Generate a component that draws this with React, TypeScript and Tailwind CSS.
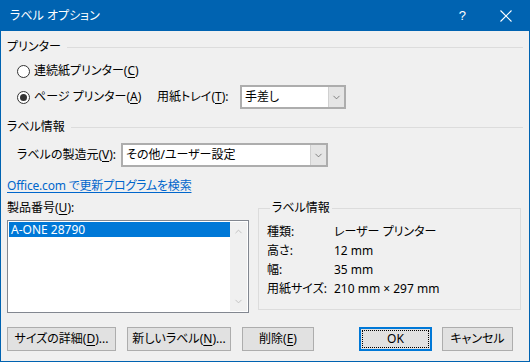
import { ChevronDown, ChevronUp } from "lucide-react";

const font = "[font-family:'Noto_Sans','Noto_Sans_CJK_JP',sans-serif] [font-feature-settings:'palt']";

function Radio({ checked }: { checked?: boolean }) {
  return (
    <span className="flex h-[13px] w-[13px] items-center justify-center rounded-full border border-[#333] bg-white">
      {checked ? <span className="h-[7px] w-[7px] rounded-full bg-[#333]" /> : null}
    </span>
  );
}

function Select({ value, width }: { value: string; width: string }) {
  return (
    <div className={`flex h-[24px] items-stretch border-2 border-[#adadad] bg-white ${width}`}>
      <div className="flex flex-1 items-center pl-[3px] text-[12px] text-black">{value}</div>
      <div className="flex w-[16px] items-center justify-center border-l border-[#d0d0d0] bg-[#e5e5e5]">
        <ChevronDown size={11} strokeWidth={1.5} className="text-[#555]" />
      </div>
    </div>
  );
}

function U({ c }: { c: string }) {
  return <span className="underline underline-offset-2">{c}</span>;
}

function GroupHeader({ label }: { label: string }) {
  return (
    <div className="flex h-[16px] items-center gap-[6px]">
      <span className="text-[12px] leading-none">{label}</span>
      <div className="h-px flex-1 bg-[#dcdcdc]" />
    </div>
  );
}

function Btn({ children, width, primary }: { children: React.ReactNode; width: string; primary?: boolean }) {
  if (primary) {
    return (
      <div className={`flex h-[24px] items-center justify-center border-2 border-[#0078d7] bg-[#e1e1e1] p-px ${width}`}>
        <div className="flex h-full w-full items-center justify-center border border-dotted border-black text-[12px]">
          {children}
        </div>
      </div>
    );
  }
  return (
    <div className={`flex h-[24px] items-center justify-center border border-[#adadad] bg-[#e1e1e1] text-[12px] ${width}`}>
      {children}
    </div>
  );
}

export default function App() {
  return (
    <div className={`flex h-[362px] w-[530px] flex-col border-x border-b border-[#0063b1] bg-[#f0f0f0] text-black ${font}`}>
      <div className="flex h-[31px] shrink-0 items-center bg-[#0063b1] pl-[9px] text-white">
        <span className="text-[12px]">ラベル オプション</span>
        <span className="ml-auto mr-[34px] text-[13px] [font-family:'Liberation_Sans',sans-serif]">?</span>
        <svg width="12" height="12" viewBox="0 0 12 12" className="mr-[17px]">
          <path d="M0.5 0.5 L11.5 11.5 M11.5 0.5 L0.5 11.5" stroke="white" strokeWidth="1.1" />
        </svg>
      </div>

      <div className="flex flex-col pl-[6px] pr-[6px]">
        <div className="mt-[8px]">
          <GroupHeader label="プリンター" />
        </div>

        <div className="mt-[8px] flex h-[16px] items-center pl-[10px]">
          <Radio />
          <span className="ml-[4px] text-[12px]">
            連続紙プリンター(<U c="C" />)
          </span>
        </div>

        <div className="mt-[6px] flex h-[24px] items-center pl-[10px]">
          <Radio checked />
          <span className="ml-[4px] w-[123px] text-[12px]">
            ページ プリンター(<U c="A" />)
          </span>
          <span className="w-[83px] text-[12px]">
            用紙トレイ(<U c="T" />):
          </span>
          <Select value="手差し" width="w-[106px]" />
        </div>

        <div className="mt-[10px]">
          <GroupHeader label="ラベル情報" />
        </div>

        <div className="mt-[8px] flex h-[24px] items-center pl-[10px]">
          <span className="w-[104px] text-[12px]">
            ラベルの製造元(<U c="V" />):
          </span>
          <Select value="その他/ユーザー設定" width="w-[207px]" />
        </div>

        <div className="mt-[11px] flex h-[16px] items-center">
          <span className="text-[12px] tracking-[-0.2px] text-[#0066cc] underline underline-offset-2">Office.com で更新プログラムを検索</span>
        </div>

        <div className="mt-[6px] flex">
          <div className="flex w-[242px] flex-col">
            <div className="flex h-[16px] items-center text-[12px]">
              製品番号(<U c="U" />):
            </div>
            <div className="mt-[4px] flex h-[93px] border border-[#828790] bg-white p-px">
              <div className="flex-1">
                <div className="flex h-[15px] items-center bg-[#0078d7] pl-[2px] text-[12px] text-white">A-ONE 28790</div>
              </div>
              <div className="flex w-[17px] flex-col items-center justify-between bg-[#f0f0f0] py-[4px]">
                <ChevronUp size={11} strokeWidth={2} className="text-[#c0c0c0]" />
                <ChevronDown size={11} strokeWidth={2} className="text-[#c0c0c0]" />
              </div>
            </div>
          </div>

          <fieldset className="ml-[9px] h-[110px] w-[263px] border border-[#dcdcdc] pl-[8px]">
            <legend className="ml-[3px] px-[2px] text-[12px] leading-[16px]">ラベル情報</legend>
            <div className="mt-[6px] flex flex-col text-[12px]">
              {[
                ["種類:", "レーザー プリンター"],
                ["高さ:", "12 mm"],
                ["幅:", "35 mm"],
                ["用紙サイズ:", "210 mm × 297 mm"],
              ].map(([k, v]) => (
                <div key={k} className="flex h-[19px] items-center">
                  <span className="w-[67px]">{k}</span>
                  <span>{v}</span>
                </div>
              ))}
            </div>
          </fieldset>
        </div>

        <div className="mt-[14px] flex items-center">
          <Btn width="w-[109px]">
            サイズの詳細(<U c="D" />)...
          </Btn>
          <div className="ml-[11px]">
            <Btn width="w-[104px]">
              新しいラベル(<U c="N" />)...
            </Btn>
          </div>
          <div className="ml-[11px]">
            <Btn width="w-[72px]">
              削除(<U c="E" />)
            </Btn>
          </div>
          <div className="ml-[45px]">
            <Btn width="w-[73px]" primary>
              OK
            </Btn>
          </div>
          <div className="ml-[10px]">
            <Btn width="w-[71px]">キャンセル</Btn>
          </div>
        </div>
      </div>
    </div>
  );
}
